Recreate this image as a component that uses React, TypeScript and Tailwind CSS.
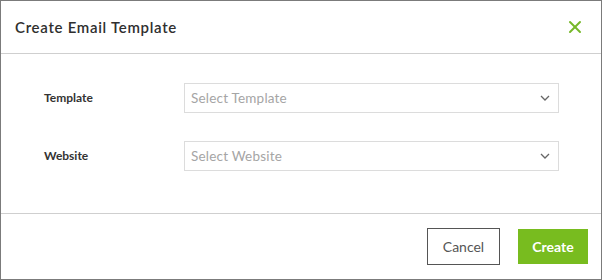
import { X } from "lucide-react";

function Chevron() {
  return (
    <svg width="10" height="6" viewBox="0 0 10 6" className="text-[#666]">
      <path d="M1 1l4 4 4-4" fill="none" stroke="currentColor" strokeWidth="1.3" />
    </svg>
  );
}

function SelectBox({ placeholder }: { placeholder: string }) {
  return (
    <div className="flex h-[30px] w-[375px] items-center justify-between border border-[#dcdcdc] bg-white pl-[6px] pr-[8px]">
      <span className="text-[13.5px] tracking-[0.2px] text-[#a5a5a5]">{placeholder}</span>
      <Chevron />
    </div>
  );
}

export default function App() {
  return (
    <div
      className="flex h-[280px] w-[602px] flex-col border border-[#7b7b7b] bg-white"
      style={{ fontFamily: "Lato, 'Open Sans', Arial, sans-serif" }}
    >
      <div className="flex h-[53px] shrink-0 items-center justify-between border-b border-[#cfcfcf] pl-[14px] pr-[16px]">
        <h1 className="text-[15px] font-semibold tracking-[0.7px] text-[#2f2f2f]">
          Create Email Template
        </h1>
        <X className="h-[20px] w-[20px] text-[#76b82a]" strokeWidth={2.4} />
      </div>
      <div className="flex flex-1 flex-col gap-[28px] pl-[43px] pt-[29px]">
        <div className="flex items-center">
          <label className="w-[140px] text-[12px] font-bold text-[#333]">Template</label>
          <SelectBox placeholder="Select Template" />
        </div>
        <div className="flex items-center">
          <label className="w-[140px] text-[12px] font-bold text-[#333]">Website</label>
          <SelectBox placeholder="Select Website" />
        </div>
      </div>
      <div className="flex h-[66px] shrink-0 items-center justify-end gap-[18px] border-t border-[#cfcfcf] pr-[13px]">
        <button className="h-[37px] w-[73px] border border-[#555] bg-white text-[14px] text-[#555]">
          Cancel
        </button>
        <button className="h-[35px] w-[70px] bg-[#78bc1f] text-[14px] font-bold text-white">
          Create
        </button>
      </div>
    </div>
  );
}
